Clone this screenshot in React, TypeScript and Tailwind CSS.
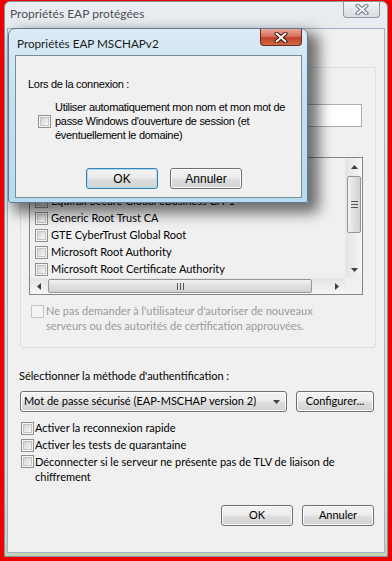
import React from "react";

const UI = { fontFamily: 'Lato, "Noto Sans", sans-serif' } as React.CSSProperties;
const SANS = { fontFamily: '"Liberation Sans", Arial, sans-serif' } as React.CSSProperties;

function Check({ disabled }: { disabled?: boolean }) {
  if (disabled) {
    return (
      <span className="block w-[13px] h-[13px] shrink-0 border border-[#c6c6c6] bg-[#f4f4f4]" />
    );
  }
  return (
    <span className="block w-[13px] h-[13px] shrink-0 border border-[#8e8f8f] bg-[#f6f6f6] p-[1px]">
      <span className="block w-full h-full border border-[#c3c3c3] bg-[linear-gradient(135deg,#d2d3d6_0%,#e8e8e9_60%,#f8f8f8_100%)]" />
    </span>
  );
}

function Btn({
  children,
  className,
  def,
}: {
  children: React.ReactNode;
  className?: string;
  def?: boolean;
}) {
  return (
    <div
      className={
        (def
          ? "border-[#3c7fb1] shadow-[inset_0_0_0_1px_#a9dcf5] "
          : "border-[#707070] shadow-[inset_0_0_0_1px_#fbfbfb] ") +
        "flex items-center justify-center rounded-[3px] border bg-[linear-gradient(#f3f3f3_0%,#ececec_48%,#dedede_52%,#d2d2d2_100%)] text-black " +
        (className ?? "")
      }
    >
      {children}
    </div>
  );
}

function XGlyph({ light }: { light?: boolean }) {
  return (
    <svg width="14" height="11" viewBox="0 0 14 11">
      <path
        d="M2.5 1.5 L11.5 9.5 M11.5 1.5 L2.5 9.5"
        stroke={light ? "#6b7480" : "#3a1208"}
        strokeWidth="4"
        strokeLinecap="round"
        fill="none"
      />
      <path
        d="M2.5 1.5 L11.5 9.5 M11.5 1.5 L2.5 9.5"
        stroke={light ? "#f4f6f8" : "#ffffff"}
        strokeWidth="2"
        strokeLinecap="round"
        fill="none"
      />
    </svg>
  );
}

function Arrow({ dir }: { dir: "up" | "down" | "left" | "right" }) {
  const pts =
    dir === "up"
      ? "0,4 3.5,0 7,4"
      : dir === "down"
      ? "0,0 3.5,4 7,0"
      : dir === "left"
      ? "4,0 0,3.5 4,7"
      : "0,0 4,3.5 0,7";
  const w = dir === "up" || dir === "down" ? 7 : 4;
  const h = dir === "up" || dir === "down" ? 4 : 7;
  return (
    <svg width={w} height={h} viewBox={`0 0 ${w} ${h}`}>
      <polygon points={pts} fill="#404040" />
    </svg>
  );
}

const certs = [
  "",
  "",
  "Equifax Secure Global eBusiness CA-1",
  "Generic Root Trust CA",
  "GTE CyberTrust Global Root",
  "Microsoft Root Authority",
  "Microsoft Root Certificate Authority",
];

function ListBox() {
  return (
    <div className="w-[334px] h-[138px] border border-[#828790] bg-[#f0f0f0] flex flex-col">
      <div className="flex flex-1 min-h-0">
        <div className="flex-1 overflow-hidden pt-[1px]">
          {certs.map((c, i) => (
            <div key={i} className="h-[17px] flex items-center pl-[5px] gap-[3px] whitespace-nowrap text-[11px] text-black">
              <Check />
              {c ? <span>{c}</span> : null}
            </div>
          ))}
        </div>
        <div className="w-[17px] flex flex-col bg-[linear-gradient(90deg,#e4e4e4,#f6f6f6)] border-l border-[#e8e8e8]">
          <div className="h-[17px] flex items-center justify-center">
            <Arrow dir="up" />
          </div>
          <div className="h-[1px]" />
          <div className="mx-[1px] h-[57px] rounded-[2px] border border-[#979797] bg-[linear-gradient(90deg,#f2f2f2,#e0e0e0_50%,#d2d2d2)] flex flex-col items-center justify-center gap-[2px]">
            <span className="block w-[7px] h-[1px] bg-[#555]" />
            <span className="block w-[7px] h-[1px] bg-[#555]" />
            <span className="block w-[7px] h-[1px] bg-[#555]" />
          </div>
          <div className="flex-1" />
          <div className="h-[17px] flex items-center justify-center">
            <Arrow dir="down" />
          </div>
        </div>
      </div>
      <div className="h-[16px] flex">
        <div className="flex-1 flex bg-[linear-gradient(#e4e4e4,#f6f6f6)]">
          <div className="w-[17px] flex items-center justify-center">
            <Arrow dir="left" />
          </div>
          <div className="my-[1px] ml-[1px] w-[264px] rounded-[2px] border border-[#979797] bg-[linear-gradient(#f2f2f2,#e0e0e0_50%,#d2d2d2)] flex items-center justify-center gap-[2px]">
            <span className="block w-[1px] h-[7px] bg-[#555]" />
            <span className="block w-[1px] h-[7px] bg-[#555]" />
            <span className="block w-[1px] h-[7px] bg-[#555]" />
          </div>
          <div className="flex-1" />
          <div className="w-[17px] flex items-center justify-center">
            <Arrow dir="right" />
          </div>
        </div>
        <div className="w-[17px] bg-[#f0f0f0]" />
      </div>
    </div>
  );
}

function Popup() {
  return (
    <div className="absolute left-[8px] top-[28px] w-[300px] h-[175px] rounded-t-[7px] rounded-b-[3px] border border-[#5a7a93] bg-[linear-gradient(#dcebf6_0%,#c4e0f2_40%,#b7dbf0_100%)] shadow-[8px_7px_14px_3px_rgba(0,0,0,0.55)] flex flex-col pl-[6px] pr-[5px] pb-[4px]">
      <div className="h-[26px] flex items-start justify-between">
        <span className="pl-[2px] mt-[6px] text-[11.7px] leading-[16px] text-[#1b1b1b]" style={UI}>
          Propriétés EAP MSCHAPv2
        </span>
        <div className="w-[42px] h-[17px] rounded-b-[4px] border border-[#6d2a1c] border-t-0 bg-[linear-gradient(#e9a99b_0%,#d9725c_45%,#c2412a_55%,#cf6a44_100%)] flex items-center justify-center">
          <XGlyph />
        </div>
      </div>
      <div className="flex-1 border border-[#7a8b9a] bg-[#f0f0f0] flex flex-col pl-[12px] pt-[21px] text-[11px] tracking-[-0.3px] text-black" style={SANS}>
        <div className="leading-[14px]">Lors de la connexion :</div>
        <div className="mt-[9px] ml-[10px] flex items-center gap-[4px]">
          <Check />
          <div className="leading-[14px]">
            <div>Utiliser automatiquement mon nom et mon mot de</div>
            <div>passe Windows d'ouverture de session (et</div>
            <div>éventuellement le domaine)</div>
          </div>
        </div>
        <div className="mt-[26px] ml-[58px] flex gap-[12px] text-[12px] tracking-normal">
          <Btn def className="w-[72px] h-[21px]">OK</Btn>
          <Btn className="w-[72px] h-[21px]">Annuler</Btn>
        </div>
      </div>
    </div>
  );
}

export default function App() {
  return (
    <div className="relative w-[392px] h-[561px] overflow-hidden bg-[#ee0000] pt-[1px] pl-[4px] pr-[4px] pb-[4px]" style={UI}>
      <div className="w-full h-full flex flex-col rounded-t-[6px] border border-[#8796a3] bg-[linear-gradient(#e9edf1_0%,#dfe5ea_40%,#d9e0e5_85%,#c4d2b4_100%)] px-[2px] pb-[3px]">
        <div className="h-[26px] flex items-start justify-between">
          <span className="pl-[3px] mt-[4px] text-[12px] leading-[16px] text-[#4a4f55]">
            Propriétés EAP protégées
          </span>
          <div className="mr-[5px] w-[37px] h-[16px] rounded-b-[4px] border border-t-0 border-[#8d99a5] bg-[linear-gradient(#f4f6f8,#e3e7eb_50%,#d9dee3)] flex items-center justify-center">
            <XGlyph light />
          </div>
        </div>
        <div className="flex-1 border border-[#a3b2c0] bg-[#f0f0f0] flex flex-col text-[11px] text-black">
          <div className="h-[28px]" />
          <div className="mt-[10px] ml-[12px] w-[356px] h-[281px] rounded-[3px] border border-[#d5dfe5] flex flex-col pl-[8px] pt-[4px]">
            <div className="h-[14px] flex items-center">
              <Check />
            </div>
            <div className="mt-[2px] h-[14px] flex items-center">
              <Check />
            </div>
            <div className="mt-[2px] w-[333px] h-[23px] border border-[#abadb3] bg-white" />
            <div className="mt-[7px] h-[16px]" />
            <div className="mt-[7px]">
              <ListBox />
            </div>
            <div className="mt-[8px] flex items-start text-[#9a9a9a]">
              <span className="ml-[2px] mt-[2px]">
                <Check disabled />
              </span>
              <div className="ml-[2px] leading-[15px]">
                <div>Ne pas demander à l'utilisateur d'autoriser de nouveaux</div>
                <div>serveurs ou des autorités de certification approuvées.</div>
              </div>
            </div>
          </div>
          <div className="pl-[11px] mt-[20px] h-[16px] leading-[16px]">Sélectionner la méthode d'authentification :</div>
          <div className="pl-[12px] mt-[7px] flex gap-[9px]">
            <div className="w-[267px] h-[21px] rounded-[3px] border border-[#707070] shadow-[inset_0_0_0_1px_#fbfbfb] bg-[linear-gradient(#f3f3f3_0%,#ececec_48%,#dedede_52%,#d2d2d2_100%)] flex items-center justify-between pl-[3px] pr-[6px] whitespace-nowrap">
              <span>Mot de passe sécurisé (EAP-MSCHAP version 2)</span>
              <Arrow dir="down" />
            </div>
            <Btn className="w-[78px] h-[21px]">Configurer...</Btn>
          </div>
          <div className="pl-[13px] mt-[8px] flex flex-col">
            <div className="h-[17px] flex items-center gap-[1px]">
              <Check />
              <span>Activer la reconnexion rapide</span>
            </div>
            <div className="h-[17px] flex items-center gap-[1px]">
              <Check />
              <span>Activer les tests de quarantaine</span>
            </div>
            <div className="flex items-start gap-[1px]">
              <span className="mt-[1px]">
                <Check />
              </span>
              <div className="leading-[15px]">
                <div>Déconnecter si le serveur ne présente pas de TLV de liaison de</div>
                <div>chiffrement</div>
              </div>
            </div>
          </div>
          <div className="mt-auto mb-[26px] pr-[10px] flex justify-end gap-[9px]">
            <Btn className="w-[72px] h-[21px]">OK</Btn>
            <Btn className="w-[72px] h-[21px]">Annuler</Btn>
          </div>
        </div>
      </div>
      <Popup />
    </div>
  );
}
